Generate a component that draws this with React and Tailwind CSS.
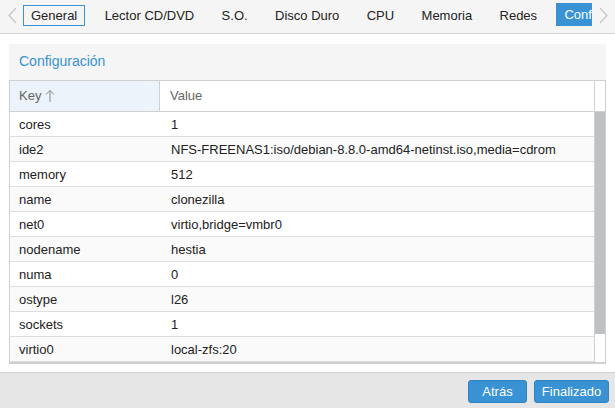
const tabs = ["General", "Lector CD/DVD", "S.O.", "Disco Duro", "CPU", "Memoria", "Redes"];

const rows = [
    ["cores", "1"],
    ["ide2", "NFS-FREENAS1:iso/debian-8.8.0-amd64-netinst.iso,media=cdrom"],
    ["memory", "512"],
    ["name", "clonezilla"],
    ["net0", "virtio,bridge=vmbr0"],
    ["nodename", "hestia"],
    ["numa", "0"],
    ["ostype", "l26"],
    ["sockets", "1"],
    ["virtio0", "local-zfs:20"],
];

const Chevron = ({ dir }) => (
    <svg width="9" height="17" viewBox="0 0 9 17" fill="none" stroke="#c4c4c4" strokeWidth="1.2">
        {dir === "left" ? <path d="M8 1 L1 8.5 L8 16" /> : <path d="M1 1 L8 8.5 L1 16" />}
    </svg>
);

const App = () => {
    return (
        <div className="w-[615px] h-[408px] flex flex-col bg-white overflow-hidden font-['Liberation_Sans',Arial,sans-serif] text-[13px] text-[#222]">

            {/* TAB BAR */}
            <div className="h-[34px] shrink-0 flex bg-[#f5f5f5] border-b border-[#d4d4d4]">
                <div className="w-[23px] flex justify-center pt-[7px] pl-[1px]">
                    <Chevron dir="left" />
                </div>
                <div className="w-[569px] flex gap-[11.4px] pt-[5px] overflow-hidden">
                    {tabs.map((t, i) => (
                        <div key={t} className={`h-[21px] shrink-0 px-[7px] flex items-center border ${i === 0 ? "border-[#3892d4]" : "border-transparent"}`}>
                            {t}
                        </div>
                    ))}
                    <div className="h-[23px] -mt-[2px] shrink-0 pl-[8px] pr-[7px] flex items-center bg-[#3892d4] text-white">
                        Confirmar
                    </div>
                </div>
                <div className="flex-1 flex justify-center pt-[7px]">
                    <Chevron dir="right" />
                </div>
            </div>

            {/* BODY */}
            <div className="flex-1 pt-[10px] px-[9px]">
                <div className="w-[597px]">
                    <div className="h-[36px] bg-[#f5f5f5] flex items-center pl-[10px] pb-[1px] text-[14px] text-[#3892d4]">
                        Configuración
                    </div>

                    {/* GRID */}
                    <div className="flex border border-b-2 border-[#d0d0d0]">
                        <div className="flex-1">
                            <div className="h-[31px] flex border-b border-[#d0d0d0] text-[#666]">
                                <div className="w-[150px] bg-[#ecf3fa] border-r border-[#d0d0d0] flex items-center pl-[9px] gap-[4px]">
                                    Key
                                    <svg width="10" height="14" viewBox="0 0 10 14" fill="none" stroke="#888" strokeWidth="1">
                                        <path d="M5 13 V1.5 M1 5.5 L5 1.5 L9 5.5" />
                                    </svg>
                                </div>
                                <div className="flex-1 flex items-center pl-[10px]">Value</div>
                            </div>
                            {rows.map(([k, v], i) => (
                                <div key={k} className={`h-[25px] flex items-center pt-[1px] border-b border-[#dedede] ${i % 2 === 1 ? "bg-[#fafafa]" : "bg-white"}`}>
                                    <div className="w-[150px] pl-[9px]">{k}</div>
                                    <div className="flex-1 pl-[11px] whitespace-nowrap">{v}</div>
                                </div>
                            ))}
                        </div>
                        <div className="w-[11px] flex flex-col border-l border-[#d0d0d0]">
                            <div className="h-[31px] border-b border-[#d0d0d0]"></div>
                            <div className="h-[222px] bg-[#bfc2c5]"></div>
                        </div>
                    </div>
                </div>
            </div>

            {/* FOOTER */}
            <div className="h-[36px] shrink-0 flex justify-end items-start gap-[7px] pt-[7px] pr-[6px] bg-[#e6e6e6] border-t border-[#d0d0d0]">
                <button className="w-[59px] h-[23px] rounded-[3px] bg-[#3892d4] border border-[#2f83c2] text-white">Atrás</button>
                <button className="w-[75px] h-[23px] rounded-[3px] bg-[#3892d4] border border-[#2f83c2] text-white">Finalizado</button>
            </div>
        </div>
    );
};

export default App;
